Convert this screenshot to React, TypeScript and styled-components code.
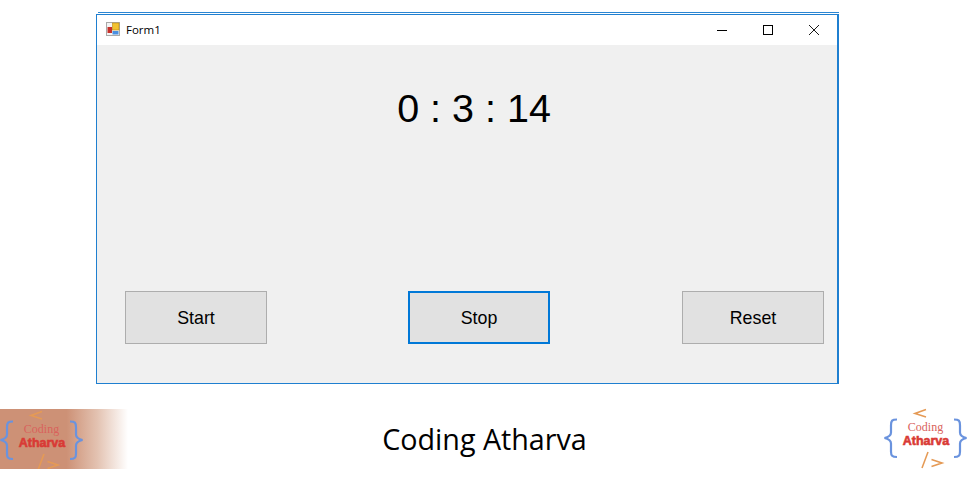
import styled, { createGlobalStyle } from "styled-components"

const GlobalStyle = createGlobalStyle`
  html, body {
    margin: 0;
    padding: 0;
    background: #fff;
  }
`

const Page = styled.div`
  width: 976px;
  height: 482px;
  overflow: hidden;
`

const Window = styled.div`
  width: 743px;
  margin: 12px 0 0 96px;

  &::before {
    content: "";
    display: block;
    height: 1px;
    margin-left: 2px;
    margin-bottom: 1px;
    background: #2b86d3;
  }
`

const Frame = styled.div`
  height: 368px;
  display: flex;
  flex-direction: column;
  border: 1px solid #1f7fd0;
  border-right-width: 2px;
`

const TitleBar = styled.div`
  height: 30px;
  flex: none;
  display: flex;
  align-items: center;
  padding-left: 9px;
  background: #fff;
`

const AppIcon = styled.svg`
  width: 14px;
  height: 14px;
  flex: none;
  margin-top: -2px;
`

const Caption = styled.span`
  margin: -2px 0 0 6px;
  flex: 1;
  font: 11.5px "Open Sans", sans-serif;
  color: #000;
`

const ChromeButton = styled.div`
  width: 46px;
  height: 30px;
  display: flex;
  align-items: center;
  justify-content: center;
  svg {
    width: 10px;
    height: 10px;
    display: block;
    margin-top: -1px;
  }
`

const Client = styled.div`
  flex: 1;
  display: flex;
  flex-direction: column;
  background: #f0f0f0;
`

const Timer = styled.div`
  height: 246px;
  padding: 37px 0 0 14px;
  box-sizing: border-box;
  text-align: center;
  font: 39.5px/52px "Liberation Sans", Arial, sans-serif;
  color: #000;
`

const ButtonRow = styled.div`
  display: grid;
  grid-template-columns: 283px 274px 142px;
  padding-left: 28px;
`

const FormButton = styled.div<{ $focused?: boolean }>`
  width: 142px;
  height: 53px;
  padding-top: 1px;
  box-sizing: border-box;
  display: flex;
  align-items: center;
  justify-content: center;
  background: #e1e1e1;
  border: ${(p) => (p.$focused ? "2px solid #0078d7" : "1px solid #adadad")};
  font: 17.8px "Liberation Sans", Arial, sans-serif;
  color: #000;
`

const Footer = styled.div`
  display: grid;
  grid-template-columns: 128px 1fr 128px;
  align-items: start;
  margin-top: 21px;
`

const FadedLogo = styled.div`
  height: 60px;
  margin-top: 4px;
  overflow: hidden;
  background: linear-gradient(90deg, #cd9176 0%, #cd9176 52%, #e3c2b1 76%, #ffffff 100%);
  svg {
    margin: -2px 0 0 -1px;
  }
`

const PlainLogo = styled.div`
  justify-self: end;
  margin-right: 7px;
`

const Brand = styled.div`
  padding: 14px 7px 0 0;
  text-align: center;
  font: 28.7px/40px "Open Sans", sans-serif;
  color: #000;
`

function Logo() {
  return (
    <svg width="86" height="66" viewBox="0 0 86 66" style={{ display: "block" }}>
      <g fill="none" stroke="#6a93de" strokeWidth="2.2">
        <path d="M14 14.5c-5 0-6 1-6 6v7c0 3-2 4.5-6.500 5.500C6 34 8 35.500 8 38.500v8c0 4 1 5.500 6 5.500" />
        <path d="M71 14.500c5 0 6 1 6 6v7c0 3 2 4.500 6.500 5.500-4.500 1-6.500 2.500-6.500 5.500v8c0 4-1 5.500-6 5.500" />
      </g>
      <g fill="none" stroke="#e59a55" strokeWidth="1.6">
        <path d="M43 4.500 32 8.500l11 3.500" />
        <path d="M45 47 39 63" />
        <path d="M48.500 54.500 59 58l-10.500 3.500" />
      </g>
      <text x="42.500" y="25.500" textAnchor="middle" fontFamily="'Liberation Serif', serif" fontSize="12" fill="#d9625c">
        Coding
      </text>
      <text x="43" y="39.500" textAnchor="middle" fontFamily="'Liberation Sans', sans-serif" fontWeight="700" fontSize="12.500" fill="#d93a35" stroke="#d93a35" strokeWidth="0.6">
        Atharva
      </text>
    </svg>
  )
}

function App() {
  return (
    <Page>
      <GlobalStyle />
      <Window>
        <Frame>
          <TitleBar>
            <AppIcon viewBox="0 0 14 14">
              <rect x="0.500" y="0.500" width="13" height="13" fill="#f4f4f4" stroke="#a9a9a9" />
              <rect x="6.500" y="1" width="6.500" height="7" fill="#f2c230" stroke="#b98a10" strokeWidth="0.600" />
              <rect x="1.500" y="5" width="4.500" height="6" fill="#c8302a" />
              <rect x="6.500" y="9" width="6" height="3.500" fill="#4a8fe0" />
            </AppIcon>
            <Caption>Form1</Caption>
            <ChromeButton>
              <svg viewBox="0 0 10 10">
                <path d="M0 5.500h10" stroke="#000" fill="none" />
              </svg>
            </ChromeButton>
            <ChromeButton>
              <svg viewBox="0 0 10 10">
                <rect x="0.500" y="0.500" width="9" height="9" stroke="#000" fill="none" />
              </svg>
            </ChromeButton>
            <ChromeButton>
              <svg viewBox="0 0 10 10">
                <path d="M0 0l10 10M10 0L0 10" stroke="#000" fill="none" strokeWidth="0.900" />
              </svg>
            </ChromeButton>
          </TitleBar>
          <Client>
            <Timer>0 : 3 : 14</Timer>
            <ButtonRow>
              <FormButton>Start</FormButton>
              <FormButton $focused>Stop</FormButton>
              <FormButton>Reset</FormButton>
            </ButtonRow>
          </Client>
        </Frame>
      </Window>
      <Footer>
        <FadedLogo>
          <Logo />
        </FadedLogo>
        <Brand>Coding Atharva</Brand>
        <PlainLogo>
          <Logo />
        </PlainLogo>
      </Footer>
    </Page>
  )
}

export default App
